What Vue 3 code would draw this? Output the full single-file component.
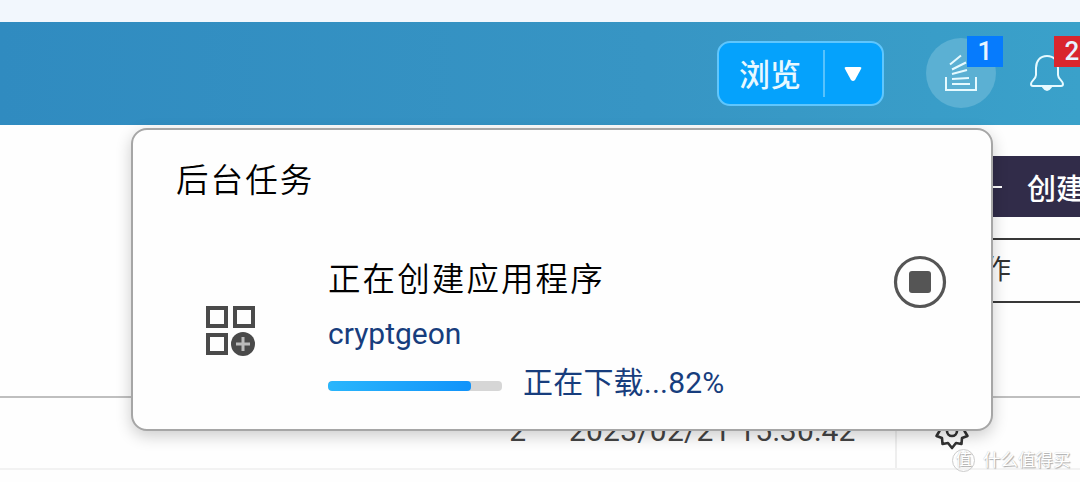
<template>
  <div class="page">
    <div class="strip"></div>

    <header class="topbar">
      <button class="browse">
        <span class="browse-label">浏览</span>
        <span class="browse-caret">
          <svg width="18" height="16" viewBox="0 0 18 16"><path d="M2 1h14q2 0 1 2L11 14q-2 2-4 0L1 3q-1-2 1-2z" fill="#fff" /></svg>
        </span>
      </button>

      <div class="tasks">
        <svg width="34" height="40" viewBox="0 0 34 40" fill="none" stroke="#e6faff" stroke-width="2">
          <path d="M2 24v13h30V24M8 31h18M8 26l17-1M8 21l15-4M8 16.500l14-7M6 11.500L17 2.500" />
        </svg>
        <span class="badge blue">1</span>
      </div>

      <div class="bell">
        <svg width="36" height="38" viewBox="0 0 36 38" fill="none" stroke="#e6faff" stroke-width="2" stroke-linejoin="round">
          <path d="M18 2C11 2 7 7 7 14v7c0 4-5 6-5 9q0 2 2 2h28q2 0 2-2c0-3-5-5-5-9v-7C29 7 25 2 18 2z" />
          <path d="M14 33q4 6 8 0z" fill="#e6faff" />
        </svg>
        <span class="badge red">2</span>
      </div>
    </header>

    <main class="content">
      <div class="create"><span class="dash"></span>创建</div>
      <div class="action">作</div>
      <div class="row">
        <span class="count">2</span>
        <span class="date">2023/02/21 15:30:42</span>
        <span class="gear">
          <svg width="36" height="36" viewBox="0 0 36 36" fill="none" stroke="#333" stroke-width="2.600" stroke-linejoin="round">
            <path d="M18 2l3.500 4.500 5.500-2 .5 6 6 1.500-3 5 3 5-5.500 2-.5 6-5.500-1L18 34l-4-5-5.500 1-.5-6L2.500 22l3-5-3-5 6-1.500.5-6 5.500 2z" />
            <circle cx="18" cy="17" r="5" />
          </svg>
        </span>
      </div>
    </main>

    <section class="popover">
      <h2 class="heading">后台任务</h2>
      <div class="task">
        <svg class="apps" width="50" height="50" viewBox="0 0 50 50">
          <g fill="none" stroke="#4a4a4a" stroke-width="4">
            <rect x="3" y="2" width="18" height="18" />
            <rect x="30" y="2" width="18" height="18" />
            <rect x="3" y="29" width="18" height="18" />
          </g>
          <circle cx="38" cy="38" r="12" fill="#4a4a4a" />
          <path d="M38 31v14M31 38h14" stroke="#bbb" stroke-width="3" />
        </svg>
        <div class="info">
          <div class="title">正在创建应用程序</div>
          <div class="name">{{ task.name }}</div>
          <div class="progress">
            <div class="bar"><div class="fill" :style="{ width: task.percent + '%' }"></div></div>
            <span class="status">正在下载...{{ task.percent }}%</span>
          </div>
        </div>
        <svg class="stop" width="54" height="54" viewBox="0 0 54 54">
          <circle cx="27" cy="27" r="24.500" fill="none" stroke="#555" stroke-width="3.200" />
          <rect x="16" y="16" width="22" height="22" rx="3" fill="#555" />
        </svg>
      </div>
    </section>

    <div class="watermark">
      <span class="seal">值</span>
      <span>什么值得买</span>
    </div>
  </div>
</template>

<script setup>
const task = { name: 'cryptgeon', percent: 82 }
</script>

<style>
body {
  margin: 0;
}
</style>

<style scoped>
.page {
  position: relative;
  width: 1080px;
  height: 482px;
  overflow: hidden;
  background: #fefefe;
  font-family: Roboto, 'Noto Sans CJK SC', sans-serif;
}

.strip {
  height: 22px;
  background: #f2f7fd;
}

.topbar {
  display: flex;
  align-items: flex-start;
  box-sizing: border-box;
  height: 103px;
  padding: 19px 0 0 717px;
  background: linear-gradient(90deg, #308bc0, #3795c4 60%, #3aa1ca);
}

.browse {
  display: flex;
  align-items: center;
  box-sizing: border-box;
  flex: 0 0 167px;
  height: 65px;
  padding: 0;
  border: 2px solid #5fc6fd;
  border-radius: 13px;
  background: #05a2fc;
  color: #e8f8ff;
  font: 500 31px/1 Roboto, 'Noto Sans CJK SC', sans-serif;
}

.browse-label {
  width: 84px;
  padding: 4px 0 0 20px;
  text-align: left;
}

.browse-caret {
  display: flex;
  align-items: center;
  justify-content: center;
  height: 47px;
  flex: 1;
  padding-right: 2px;
  border-left: 2px solid #57c2fc;
}

.tasks {
  position: relative;
  display: flex;
  align-items: center;
  justify-content: center;
  flex: 0 0 70px;
  height: 70px;
  margin: -3px 0 0 42px;
  border-radius: 50%;
  background: #5bb0d3;
}

.bell {
  position: relative;
  flex: 0 0 36px;
  margin: 13px 0 0 33px;
}

.badge {
  position: absolute;
  width: 36px;
  height: 31px;
  color: #e8f4ff;
  font-size: 26px;
  font-weight: 500;
  line-height: 31px;
  text-align: center;
}

.blue {
  top: -2px;
  left: 41px;
  background: #067bfd;
}

.red {
  top: -18px;
  left: 25px;
  background: #d9262e;
}

.content {
  display: flex;
  flex-direction: column;
  padding-top: 31px;
}

.create {
  display: flex;
  align-items: center;
  align-self: flex-end;
  box-sizing: border-box;
  width: 140px;
  height: 61px;
  padding-left: 42px;
  background: #312c49;
  color: #fff;
  font-size: 29px;
  font-weight: 500;
  white-space: nowrap;
}

.dash {
  flex: 0 0 20px;
  height: 2px;
  margin-right: 25px;
  background: #fff;
}

.action {
  align-self: flex-end;
  box-sizing: border-box;
  width: 140px;
  height: 65px;
  margin-top: 21px;
  padding-left: 44px;
  border: solid #383838;
  border-width: 2px 0;
  color: #333;
  font-size: 27px;
  line-height: 61px;
}

.row {
  display: grid;
  grid-template-columns: 526px 371px 1fr;
  height: 70px;
  margin-top: 93px;
  border-top: 2px solid #bfbfbf;
  border-bottom: 2px solid #f2f2f2;
  color: #444;
  font-size: 30px;
  line-height: 66px;
}

.count {
  text-align: right;
}

.date {
  padding-left: 43px;
  border-right: 2px solid #eee;
  letter-spacing: 0.2px;
}

.gear {
  padding: 16px 0 0 37px;
  line-height: 0;
}

.popover {
  position: absolute;
  top: 128px;
  left: 131px;
  box-sizing: border-box;
  width: 862px;
  height: 303px;
  padding: 27px 44px 0 43px;
  border: 2px solid #a6a6a6;
  border-radius: 16px;
  background: #fefefe;
  box-shadow: 0 5px 16px rgba(0, 0, 0, 0.2);
}

.heading,
.title {
  margin: 0;
  color: #000;
  font-size: 32.500px;
  font-weight: 350;
  line-height: 50px;
  letter-spacing: 2.100px;
}

.heading {
  margin-top: -1px;
}

.task {
  display: flex;
  margin-top: 49px;
}

.apps {
  margin: 51px 73px 0 29px;
}

.info {
  flex: 1;
}

.name,
.status {
  color: #173d7d;
  font-size: 30px;
}

.name {
  margin-top: 9px;
  line-height: 40px;
}

.progress {
  display: flex;
  align-items: center;
  height: 50px;
  margin-top: 3px;
}

.bar {
  width: 174px;
  height: 10px;
  margin: 7px 21px 0 0;
  border-radius: 4px;
  overflow: hidden;
  background: #d6d6d6;
}

.fill {
  height: 100%;
  border-radius: 4px;
  background: linear-gradient(90deg, #2ab6fc, #1193fa);
}

.status {
  margin-bottom: 5px;
  letter-spacing: 0.2px;
}

.watermark {
  position: absolute;
  top: 448px;
  left: 952px;
  display: flex;
  align-items: center;
  gap: 8px;
  color: #fff;
  font-size: 17.500px;
  line-height: 24px;
  text-shadow: 1px 1px 1px #aaa, 0 0 1px #bbb;
}

.seal {
  box-sizing: border-box;
  width: 23px;
  height: 23px;
  border: 1px solid #ccc;
  border-radius: 50%;
  font-size: 16px;
  line-height: 20px;
  text-align: center;
}
</style>
